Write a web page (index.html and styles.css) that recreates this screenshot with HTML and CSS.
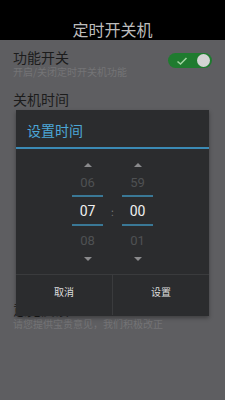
FILE: index.html
```html
<!DOCTYPE html>
<html>
<head>
<meta charset="utf-8">
<link rel="stylesheet" href="styles.css">
</head>
<body>
<div class="screen">
  <div class="topbar">定时开关机</div>
  <div class="list">
    <div class="item">
      <div class="texts">
        <div class="t">功能开关</div>
        <div class="s">开启/关闭定时开关机功能</div>
      </div>
      <div class="toggle">
        <svg width="12" height="10" viewBox="0 0 12 10"><path d="M1.5 5.5 L4.5 8 L10.5 2" fill="none" stroke="#9fd39f" stroke-width="1.6"/></svg>
        <span class="knob"></span>
      </div>
    </div>
    <div class="item"><div class="texts"><div class="t">关机时间</div></div></div>
    <div class="item"></div>
    <div class="item"></div>
    <div class="item"></div>
    <div class="item"></div>
    <div class="item"><div class="texts"><div class="t">意见反馈</div><div class="s">请您提供宝贵意见，我们积极改正</div></div></div>
  </div>

  <div class="dialog">
    <div class="dtitle">设置时间</div>
    <div class="picker">
      <div class="col">
        <span class="arrow up"></span>
        <div class="num faded">06</div>
        <div class="line"></div>
        <div class="num cur">07</div>
        <div class="line"></div>
        <div class="num faded">08</div>
        <span class="arrow down"></span>
      </div>
      <div class="colon">:</div>
      <div class="col">
        <span class="arrow up"></span>
        <div class="num faded">59</div>
        <div class="line"></div>
        <div class="num cur">00</div>
        <div class="line"></div>
        <div class="num faded">01</div>
        <span class="arrow down"></span>
      </div>
    </div>
    <div class="buttons">
      <div class="btn">取消</div>
      <div class="btn">设置</div>
    </div>
  </div>
</div>
</body>
</html>
```
FILE: styles.css
```css
html, body { margin: 0; padding: 0; }
body {
  width: 225px; height: 400px; overflow: hidden;
  font-family: "Noto Sans CJK SC", "Roboto", sans-serif;
  background: #5e5e61;
}
.screen { position: relative; width: 225px; height: 400px; background: #5e5e61; }
.topbar {
  height: 40px; background: #000; color: #bdbdbd;
  font-size: 16px; line-height: 18px;
  display: flex; justify-content: center; align-items: center;
  box-sizing: border-box; padding-top: 18px;
}
.list { display: flex; flex-direction: column; padding-top: 8px; }
.item {
  height: 42px; box-sizing: border-box; padding: 2px 13px 0 13px;
  display: flex; align-items: flex-start; justify-content: space-between;
}
.texts { display: flex; flex-direction: column; }
.t { font-size: 14px; line-height: 14px; color: #1c1c1c; }
.s { font-size: 10px; line-height: 12px; color: #747476; margin-top: 2px; }
.toggle {
  width: 44px; height: 15px; border-radius: 8px; background: #1f7b2f;
  margin-top: 3px; position: relative;
  display: flex; align-items: center; padding-left: 8px; box-sizing: border-box;
}
.knob {
  position: absolute; right: 2px; top: 1px; width: 13px; height: 13px;
  border-radius: 50%; background: #d4d4d4;
}
.dialog {
  position: absolute; left: 16px; top: 110px; width: 193px; height: 206px;
  background: #2b2c2e; box-shadow: 0 2px 4px rgba(0,0,0,0.35);
  display: flex; flex-direction: column;
}
.dtitle {
  height: 39px; box-sizing: border-box; padding: 11px 0 0 11px;
  font-size: 14px; line-height: 18px; color: #4ca7d7;
  border-bottom: 2px solid #3b8ab5;
}
.picker {
  height: 125px; display: flex; justify-content: center; align-items: flex-start;
  padding-top: 14px; box-sizing: border-box;
}
.col { width: 32px; display: flex; flex-direction: column; align-items: center; }
.colon { width: 18px; text-align: center; color: #777; font-size: 10px; line-height: 12px; margin-top: 43px; }
.arrow { width: 0; height: 0; border-left: 4px solid transparent; border-right: 4px solid transparent; }
.arrow.up { border-bottom: 4px solid #8a8a8c; margin-bottom: 8px; }
.arrow.down { border-top: 4px solid #8a8a8c; margin-top: 8px; }
.num { font-size: 13px; line-height: 16px; font-family: "Roboto", sans-serif; }
.num.faded { color: #4f5153; }
.num.cur { color: #f0f0f0; font-size: 14px; margin: 6px 0 0; }
.line { width: 31px; height: 2px; background: #3a7896; margin-top: 4px; }
.num.cur + .line { margin-top: 5px; }
.line + .num.faded { margin-top: 7px; }
.buttons {
  height: 40px; display: flex; border-top: 1px solid #3a3b3d;
}
.btn {
  flex: 1; display: flex; align-items: center; justify-content: center;
  color: #dcdcdc; font-size: 10px; padding-bottom: 8px;
}
.btn + .btn { border-left: 1px solid #3a3b3d; }
```
